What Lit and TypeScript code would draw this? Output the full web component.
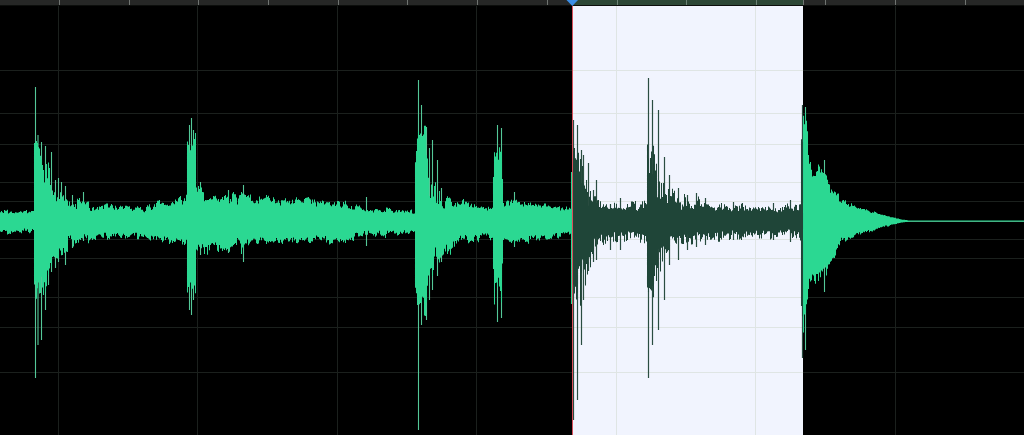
import { LitElement, html, css, svg } from "lit";
import { customElement } from "lit/decorators.js";

const W = 1024, H = 429, OFF = 6, MID = 221 - OFF;
const SEL_A = 572, SEL_B = 803;
const VX = [58, 197, 337, 476, 616, 755, 895];
const HY = [70, 113, 144, 182, 201, 239, 258, 297, 327, 372];
const TICKS = [59, 129, 198, 268, 338, 407, 477, 547, 617, 686, 756, 803, 825, 895, 965];

// x, core top, core bottom, peak top, peak bottom (absolute page y)
const ENV: number[][] = [
  [0, 213, 229, 208, 236], [30, 213, 229, 208, 235], [33, 213, 229, 208, 234],
  [34, 150, 285, 130, 325], [38, 140, 280, 132, 335], [43, 180, 262, 145, 325], [47, 203, 248, 150, 300],
  [52, 206, 242, 155, 272], [60, 209, 238, 180, 266], [70, 210, 236, 192, 252], [85, 211, 235, 196, 245],
  [110, 211, 233, 203, 242], [145, 212, 232, 204, 240], [155, 208, 236, 197, 247], [175, 205, 237, 195, 250],
  [186, 205, 238, 190, 252], [187, 145, 290, 130, 310], [195, 150, 285, 132, 308], [196, 192, 248, 180, 262],
  [205, 203, 238, 185, 258], [240, 204, 238, 188, 260], [260, 204, 238, 193, 247], [300, 204, 238, 193, 247],
  [345, 208, 235, 197, 245], [358, 211, 232, 200, 243], [380, 212, 231, 206, 239], [414, 214, 229, 208, 236],
  [415, 165, 285, 150, 305], [418, 130, 300, 110, 330], [425, 135, 298, 120, 322], [428, 195, 270, 145, 295],
  [436, 206, 240, 158, 276], [445, 208, 236, 190, 262], [470, 209, 234, 198, 246], [492, 211, 232, 204, 241],
  [494, 160, 285, 135, 310], [501, 160, 280, 130, 308], [503, 206, 238, 193, 250], [520, 206, 237, 196, 247],
  [545, 208, 234, 201, 244], [570, 212, 230, 205, 238],
  [571, 190, 265, 140, 330], [577, 175, 275, 125, 340], [584, 200, 250, 150, 325], [592, 206, 238, 185, 265],
  [604, 208, 234, 197, 250], [640, 209, 233, 197, 248], [646, 206, 236, 193, 250], [647, 170, 280, 125, 330],
  [654, 170, 285, 120, 325], [657, 195, 255, 125, 312], [664, 206, 241, 170, 265], [680, 208, 235, 186, 255],
  [710, 209, 233, 197, 247], [760, 210, 232, 202, 243], [798, 210, 231, 200, 242], [800, 210, 232, 198, 245],
  [801, 135, 320, 115, 345], [806, 115, 308, 107, 328], [808, 165, 287, 135, 312], [812, 180, 272, 168, 287],
  [821, 172, 272, 158, 292], [830, 192, 258, 178, 270], [842, 205, 238, 196, 244], [860, 209, 233, 205, 237],
  [880, 215, 227, 213, 229], [900, 219.5, 222.5, 219, 223], [910, 220.6, 221.6, 220.6, 221.6], [1024, 220.6, 221.6, 220.6, 221.6],
];

// Hand-placed peaks: x, top, bottom
const SPIKES: number[][] = [
  [35, 87, 378], [37.5, 135, 345], [41, 142, 340], [45, 146, 310], [51, 152, 272], [48, 165, 285], [55, 180, 268], [58, 178, 262], [61, 182, 250], [65, 186, 265], [72, 195, 248], [83, 192, 241],
  [191, 118, 315], [189, 125, 310], [193, 130, 300], [200, 182, 255], [243, 185, 262], [228, 190, 253],
  [366, 197, 246], [418, 80, 430], [421, 105, 325], [426, 127, 320], [429, 148, 300], [432, 140, 290], [437, 160, 276], [441, 188, 262],
  [497, 125, 322], [501, 128, 318], [514, 192, 247], [573, 120, 420], [577, 125, 400], [581, 150, 345], [583, 155, 300],
  [588, 163, 271], [593, 190, 262], [596, 180, 260], [610, 204, 250], [620, 198, 250], [648, 78, 378], [652, 100, 345], [658, 110, 330], [664, 157, 300], [669, 175, 265], [678, 188, 260], [687, 195, 250],
  [696, 193, 247], [705, 198, 245], [733, 202, 240], [773, 203, 240], [790, 200, 242], [802, 105, 358], [805, 107, 350], [824, 160, 292],
];

function lerp(x: number) {
  for (let i = 1; i < ENV.length; i++) {
    if (x <= ENV[i][0]) {
      const a = ENV[i - 1], b = ENV[i];
      const t = (x - a[0]) / (b[0] - a[0] || 1);
      return a.map((v, k) => v + (b[k] - v) * t);
    }
  }
  return ENV[ENV.length - 1];
}

function buildWave() {
  let seed = 90210;
  const rnd = () => ((seed = (seed * 1664525 + 1013904223) >>> 0) / 4294967296);
  const bright: string[] = [];
  const dark: string[] = [];
  let lowT = 0.5, lowB = 0.5, nextT = 0, nextB = 0;
  for (let x = 0; x < W; x++) {
    const [, ct, cb, pt, pb] = lerp(x);
    const inSel = x >= SEL_A && x < SEL_B;
    if (x >= nextT) { lowT = Math.pow(rnd(), 1.4); nextT = x + 2 + Math.floor(rnd() * 4); }
    if (x >= nextB) { lowB = Math.pow(rnd(), 1.4); nextB = x + 2 + Math.floor(rnd() * 4); }
    const mix = inSel ? 0.35 : 0.6;
    const ft = mix * lowT + (1 - mix) * rnd();
    const fb = mix * lowB + (1 - mix) * rnd();
    const shrink = (inSel ? 0.8 : 1) * (1 - 0.12 * rnd());
    const top = 221 + (ct - 221) * shrink + (pt - ct) * ft;
    const bot = 221 + (cb - 221) * shrink + (pb - cb) * fb;
    const seg = `M${x + 0.5} ${(top - OFF).toFixed(1)}V${(bot - OFF).toFixed(1)}`;
    (inSel ? dark : bright).push(seg);
  }
  const thinB: string[] = [], thinD: string[] = [];
  for (const [x, t, b] of SPIKES) {
    const seg = `M${x + 0.5} ${t - OFF}V${b - OFF}`;
    (x >= SEL_A && x < SEL_B ? thinD : thinB).push(seg);
  }
  return { bright: bright.join(""), dark: dark.join(""), thinB: thinB.join(""), thinD: thinD.join("") };
}

const WAVE = buildWave();

@customElement("app-root")
export class AppRoot extends LitElement {
  static styles = css`
    :host { display: flex; flex-direction: column; width: 1024px; height: 435px; background: #000; overflow: hidden; }
    .ruler { display: block; flex: none; width: 1024px; height: 6px; }
    .plot { display: block; flex: none; width: 1024px; height: 429px; filter: blur(0.45px); }
    .ruler-bg { fill: #262726; }
    .ruler-sel { fill: #2d4736; }
    .ruler-edge { fill: #0c0e0c; }
    .tick { fill: #6f7370; }
    .tick-sel { fill: #6d8276; }
    .marker { fill: #3b8ee6; }
    .sel { fill: #f1f4fe; }
    .grid { stroke: #1b201d; stroke-width: 1; }
    .grid-sel { stroke: #dfe5e4; stroke-width: 1; }
    .w-bright { stroke: #2bd892; stroke-width: 1.05; fill: none; }
    .w-dark { stroke: #1f4538; stroke-width: 1.05; fill: none; }
    .t-bright { stroke: #54c898; stroke-width: 1.1; fill: none; }
    .t-dark { stroke: #2a4d41; stroke-width: 1.2; fill: none; }
    .tail { stroke: #5f8f78; stroke-width: 1; }
    .playhead { stroke: #d9505c; stroke-width: 1; }
  `;

  render() {
    return html`
      <svg class="ruler" viewBox="0 0 1024 6" xmlns="http://www.w3.org/2000/svg">
        <rect class="ruler-bg" width="1024" height="6"></rect>
        <rect class="ruler-sel" x=${SEL_A} width=${SEL_B - SEL_A} height="6"></rect>
        <rect class="ruler-edge" y="5" width="1024" height="1"></rect>
        ${TICKS.map((x) => svg`<rect class=${x > SEL_A && x < SEL_B ? "tick-sel" : "tick"} x=${x} width="1" height="5"></rect>`)}
        <path class="marker" d="M566.5 0H578L572.3 6Z"></path>
      </svg>
      <svg class="plot" viewBox="0 0 1024 429" xmlns="http://www.w3.org/2000/svg">
        ${HY.map((y) => svg`<line class="grid" x1="0" x2="1024" y1=${y - OFF + 0.5} y2=${y - OFF + 0.5}></line>`)}
        ${VX.map((x) => svg`<line class="grid" x1=${x + 0.5} x2=${x + 0.5} y1="0" y2="429"></line>`)}
        <rect class="sel" x=${SEL_A} y="0" width=${SEL_B - SEL_A} height=${H}></rect>
        ${HY.map((y) => svg`<line class="grid-sel" x1=${SEL_A} x2=${SEL_B} y1=${y - OFF + 0.5} y2=${y - OFF + 0.5}></line>`)}
        ${VX.filter((x) => x > SEL_A && x < SEL_B).map((x) => svg`<line class="grid-sel" x1=${x + 0.5} x2=${x + 0.5} y1="0" y2="429"></line>`)}
        <line class="tail" x1="905" x2="1024" y1=${MID + 0.5} y2=${MID + 0.5}></line>
        <path class="t-bright" d=${WAVE.thinB}></path>
        <path class="t-dark" d=${WAVE.thinD}></path>
        <path class="w-bright" d=${WAVE.bright}></path>
        <path class="w-dark" d=${WAVE.dark}></path>
        <line class="playhead" x1=${SEL_A + 0.5} x2=${SEL_A + 0.5} y1="0" y2="429"></line>
      </svg>
    `;
  }
}
